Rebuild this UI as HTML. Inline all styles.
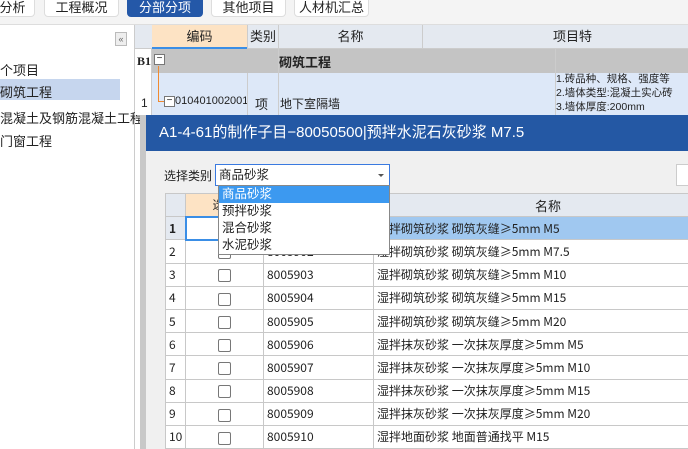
<!DOCTYPE html><html><head><meta charset="utf-8"><style>
*{margin:0;padding:0;box-sizing:border-box}
html,body{width:688px;height:449px;overflow:hidden}
body{background:#fff;font-family:"Liberation Sans","Noto Sans CJK SC",sans-serif;font-size:12px;color:#222;position:relative}
.abs{position:absolute}
.tab{position:absolute;top:-6px;height:23px;border:1px solid #ddd;border-radius:4px;background:#fff;text-align:center;line-height:26px;font-size:13px}
.g td{border:1px solid #c8c8c8;height:23.2px;padding:0 3px;white-space:nowrap;overflow:hidden}
.cb{display:inline-block;width:13px;height:13px;border:1px solid #777;border-radius:2px;background:#fff;vertical-align:middle}
.mono{font-family:"Noto Sans CJK SC","Liberation Mono",monospace;font-size:12px}
</style></head><body>
<div class="abs" style="left:0;top:0;width:688px;height:25px;background:#f4f4f4;border-bottom:1px solid #ddd"></div>
<div class="tab" style="left:-10px;width:45px">分析</div>
<div class="tab" style="left:44px;width:75px">工程概况</div>
<div class="tab" style="left:127px;width:76px;background:#2458a8;color:#fff;border-color:#2458a8">分部分项</div>
<div class="tab" style="left:211px;width:75px">其他项目</div>
<div class="tab" style="left:294px;width:75px">人材机汇总</div>
<!-- left panel -->
<div class="abs" style="left:0;top:25px;width:135px;height:424px;background:#fff;border-right:1px solid #ccc"></div>
<div class="abs" style="left:115px;top:32px;width:12px;height:14px;border:1px solid #bbb;background:#eee;font-size:9px;line-height:12px;text-align:center;color:#666">«</div>
<div class="abs" style="left:0;top:60px;font-size:13px">个项目</div>
<div class="abs" style="left:0;top:79px;width:120px;height:21px;background:#c6d6ee"></div>
<div class="abs" style="left:0;top:82px;font-size:13px">砌筑工程</div>
<div class="abs" style="left:0;top:108px;font-size:13px">混凝土及钢筋混凝土工程</div>
<div class="abs" style="left:0;top:131px;font-size:13px">门窗工程</div>
<!-- main grid -->
<div class="abs" style="left:135px;top:25px;width:553px;height:24px;background:#e4e9f0;border-bottom:1px solid #ccc"></div>
<div class="abs" style="left:152px;top:25px;width:95px;height:24px;background:#fde3c4;border-bottom:2px solid #3a8ee6;text-align:center;line-height:24px;font-size:13px">编码</div>
<div class="abs" style="left:247px;top:25px;width:31px;height:24px;border-left:1px solid #ccc;text-align:center;line-height:24px;font-size:13px">类别</div>
<div class="abs" style="left:278px;top:25px;width:144px;height:24px;border-left:1px solid #ccc;text-align:center;line-height:24px;font-size:13px">名称</div>
<div class="abs" style="left:422px;top:25px;width:266px;height:24px;border-left:1px solid #ccc;padding-left:130px;line-height:24px;font-size:13px">项目特</div>
<div class="abs" style="left:135px;top:49px;width:17px;height:66px;background:#fff;border-right:1px solid #ccc"></div>
<div class="abs" style="left:152px;top:49px;width:536px;height:24px;background:#c4c4c4"></div>
<div class="abs" style="left:137px;top:54px;font-weight:bold;font-family:'Liberation Serif',serif">B1</div>
<div class="abs" style="left:154px;top:54px;width:11px;height:11px;border:1px solid #777;background:#fff;font-size:10px;line-height:8px;text-align:center">−</div>
<div class="abs" style="left:279px;top:52px;font-weight:bold;font-size:13px">砌筑工程</div>
<div class="abs" style="left:152px;top:73px;width:536px;height:42px;background:#dde8f8"></div>
<div class="abs" style="left:158px;top:66px;width:1px;height:36px;background:#f08a30"></div>
<div class="abs" style="left:158px;top:101px;width:6px;height:1px;background:#f08a30"></div>
<div class="abs" style="left:164px;top:96px;width:11px;height:11px;border:1px solid #777;background:#fff;font-size:10px;line-height:8px;text-align:center">−</div>
<div class="abs" style="left:141px;top:96px">1</div>
<div class="abs" style="left:175px;top:95px;font-size:11px">010401002001</div>
<div class="abs" style="left:255px;top:94px;font-size:13px">项</div>
<div class="abs" style="left:280px;top:95px">地下室隔墙</div>
<div class="abs" style="left:556px;top:72px;font-size:10.5px;line-height:14px">1.砖品种、规格、强度等<br>2.墙体类型:混凝土实心砖<br>3.墙体厚度:200mm</div>
<div class="abs" style="left:247px;top:73px;width:1px;height:42px;background:#ccc"></div>
<div class="abs" style="left:278px;top:49px;width:1px;height:66px;background:#ccc"></div>
<div class="abs" style="left:555px;top:49px;width:1px;height:66px;background:#ccc"></div>
<!-- dialog -->
<div class="abs" style="left:140px;top:115px;width:560px;height:340px;background:#c8c8c8"></div>
<div class="abs" style="left:146px;top:115px;width:542px;height:334px;background:#f0f0f0;overflow:hidden">
<div class="abs" style="left:0;top:0;width:542px;height:36px;background:#2458a4;color:#fff;font-size:15px;line-height:36px;padding-left:13px">A1-4-61的制作子目−80050500|预拌水泥石灰砂浆 M7.5</div>
</div>
<div class="abs" style="left:164px;top:167px;font-size:12px">选择类别</div>
<div class="abs" style="left:215px;top:164px;width:175px;height:22px;background:#fff;border:1px solid #3a7ae0;font-size:12.5px;line-height:20px;padding-left:3px">商品砂浆</div>
<div class="abs" style="left:378px;top:174px;width:0;height:0;border-left:3px solid transparent;border-right:3px solid transparent;border-top:3px solid #555"></div>
<div class="abs" style="left:676px;top:164px;width:14px;height:22px;background:#fff;border:1px solid #ccc"></div>
<table class="g abs mono" style="left:165px;top:193px;border-collapse:collapse;background:#fff;table-layout:fixed;width:540px">
<colgroup><col style="width:20px"><col style="width:78px"><col style="width:110px"><col style="width:332px"></colgroup>
<tr style="background:#e4e9f0"><td></td><td style="background:#fde3c4;text-align:center">选择</td><td></td><td style="text-align:center;font-size:13px;padding-left:0;text-indent:20px">名称</td></tr>
<tr><td style="background:#e4e9f0;font-weight:bold">1</td><td style="border:2px solid #3a8ee6"></td><td></td><td style="background:#a0c8f0">湿拌砌筑砂浆 砌筑灰缝≥5mm M5</td></tr>
<tr><td>2</td><td style="text-align:center"><span class="cb"></span></td><td>8005902</td><td>湿拌砌筑砂浆 砌筑灰缝≥5mm M7.5</td></tr>
<tr><td>3</td><td style="text-align:center"><span class="cb"></span></td><td>8005903</td><td>湿拌砌筑砂浆 砌筑灰缝≥5mm M10</td></tr>
<tr><td>4</td><td style="text-align:center"><span class="cb"></span></td><td>8005904</td><td>湿拌砌筑砂浆 砌筑灰缝≥5mm M15</td></tr>
<tr><td>5</td><td style="text-align:center"><span class="cb"></span></td><td>8005905</td><td>湿拌砌筑砂浆 砌筑灰缝≥5mm M20</td></tr>
<tr><td>6</td><td style="text-align:center"><span class="cb"></span></td><td>8005906</td><td>湿拌抹灰砂浆 一次抹灰厚度≥5mm M5</td></tr>
<tr><td>7</td><td style="text-align:center"><span class="cb"></span></td><td>8005907</td><td>湿拌抹灰砂浆 一次抹灰厚度≥5mm M10</td></tr>
<tr><td>8</td><td style="text-align:center"><span class="cb"></span></td><td>8005908</td><td>湿拌抹灰砂浆 一次抹灰厚度≥5mm M15</td></tr>
<tr><td>9</td><td style="text-align:center"><span class="cb"></span></td><td>8005909</td><td>湿拌抹灰砂浆 一次抹灰厚度≥5mm M20</td></tr>
<tr><td>10</td><td style="text-align:center"><span class="cb"></span></td><td>8005910</td><td>湿拌地面砂浆 地面普通找平 M15</td></tr>
</table>
<div class="abs" style="left:218px;top:185px;width:172px;height:70px;background:#fff;border:1px solid #888;font-size:12.5px;line-height:17px">
<div style="background:#3c99f0;color:#fff;padding-left:3px">商品砂浆</div>
<div style="padding-left:3px">预拌砂浆</div>
<div style="padding-left:3px">混合砂浆</div>
<div style="padding-left:3px">水泥砂浆</div>
</div>
</body></html>
